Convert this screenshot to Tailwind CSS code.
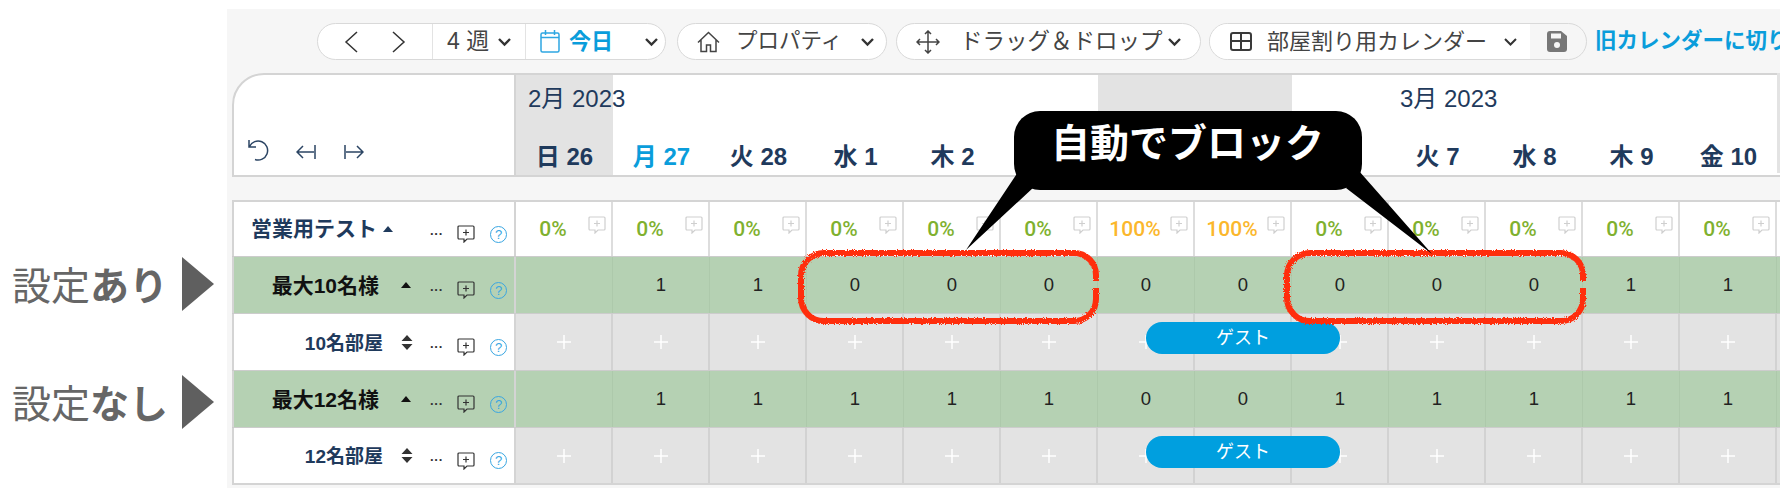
<!DOCTYPE html>
<html lang="ja">
<head>
  <meta charset="UTF-8">
  <title>部屋割り用カレンダー</title>
  <script src="https://cdn.jsdelivr.net/npm/@tailwindcss/browser@4"></script>
</head>
<body class="relative w-[1788px] h-[496px] overflow-hidden bg-white font-['Liberation_Sans','Noto_Sans_CJK_JP',sans-serif]">
  <div class="flex">
    <!-- side labels -->
    <aside class="w-[227px] shrink-0 pt-[257px] pl-[12px] text-[#666666]">
      <div class="flex items-center h-[54px]">
        <p class="w-[170px] pt-[4px] text-[39px] leading-none whitespace-nowrap">設定<b class="font-bold">あり</b></p>
        <div class="w-0 h-0 border-y-[27px] border-y-transparent border-l-[32px] border-l-[#5f5f5f]"></div>
      </div>
      <div class="flex items-center h-[54px] mt-[64px]">
        <p class="w-[170px] pt-[4px] text-[39px] leading-none whitespace-nowrap">設定<b class="font-bold">なし</b></p>
        <div class="w-0 h-0 border-y-[27px] border-y-transparent border-l-[32px] border-l-[#5f5f5f]"></div>
      </div>
    </aside>

    <main class="w-[1553px] h-[479px] mt-[9px] bg-[#f6f6f6] overflow-hidden">
      <!-- toolbar -->
      <div class="flex items-center h-[37px] mt-[14px] pl-[90px] text-[#444444] text-[22px] whitespace-nowrap">
        <div class="flex items-center shrink-0 w-[349px] h-full bg-white rounded-full border border-[#d9d9d9]">
          <div class="flex items-center w-[115px] h-full pl-[26px] border-r border-[#e3e3e3]">
            <svg class="w-[14px] h-[24px]" viewBox="0 0 14 24" fill="none" stroke="#333" stroke-width="1.5"><path d="M13 2 2 12l11 10"/></svg>
            <svg class="w-[14px] h-[24px] ml-[34px]" viewBox="0 0 14 24" fill="none" stroke="#333" stroke-width="1.5"><path d="m1 2 11 10L1 22"/></svg>
          </div>
          <div class="flex items-center w-[93px] h-full pl-[14px] border-r border-[#e3e3e3]">
            <span class="w-[50px] text-[23px]">4 週</span>
            <svg class="w-[15px] h-[10px]" viewBox="0 0 15 10" fill="none" stroke="#333" stroke-width="2.4"><path d="m2 2 5.500 5.500L13 2"/></svg>
          </div>
          <div class="flex items-center h-full pl-[14px]">
            <svg class="w-[20px] h-[23px]" viewBox="0 0 20 23" fill="none" stroke="#2ea6e2" stroke-width="1.500"><rect x="1" y="3" width="18" height="19" rx="1.500"/><path d="M1 7.500h18M5.500 0v5M14.500 0v5"/></svg>
            <b class="ml-[9px] text-[22px] text-[#0a9ddb]">今日</b>
            <svg class="w-[15px] h-[10px] ml-[31px]" viewBox="0 0 15 10" fill="none" stroke="#333" stroke-width="2.4"><path d="m2 2 5.500 5.500L13 2"/></svg>
          </div>
        </div>
        <div class="flex items-center shrink-0 w-[210px] h-full ml-[11px] pl-[19px] bg-white rounded-full border border-[#d9d9d9]">
          <svg class="w-[23px] h-[22px]" viewBox="0 0 23 22" fill="none" stroke="#444" stroke-width="1.500"><path d="M1 11.500 11.500 1.500 22 11.500M4 9v11.500h5.500V14h4v6.500H19V9"/></svg>
          <span class="ml-[16px] w-[110px] text-[21.500px]">プロパティ</span>
          <svg class="w-[15px] h-[10px] ml-[14px]" viewBox="0 0 15 10" fill="none" stroke="#333" stroke-width="2.4"><path d="m2 2 5.500 5.500L13 2"/></svg>
        </div>
        <div class="flex items-center shrink-0 w-[305px] h-full ml-[9px] pl-[19px] bg-white rounded-full border border-[#d9d9d9]">
          <svg class="w-[24px] h-[24px]" viewBox="0 0 24 24" fill="none" stroke="#444" stroke-width="1.500"><path d="M12 1v22M1 12h22M9 4l3-3 3 3M9 20l3 3 3-3M4 9l-3 3 3 3M20 9l3 3-3 3"/></svg>
          <span class="ml-[20px] w-[207px] text-[22.500px]">ドラッグ＆ドロップ</span>
          <svg class="w-[15px] h-[10px]" viewBox="0 0 15 10" fill="none" stroke="#333" stroke-width="2.4"><path d="m2 2 5.500 5.500L13 2"/></svg>
        </div>
        <div class="flex items-center shrink-0 w-[378px] h-full ml-[8px] rounded-full border border-[#d9d9d9] overflow-hidden">
          <div class="flex items-center w-[320px] h-full pl-[20px] bg-white">
            <svg class="w-[22px] h-[19px]" viewBox="0 0 22 19" fill="none" stroke="#3a3a3a" stroke-width="2"><rect x="1" y="1" width="20" height="17" rx="2"/><path d="M1 9h20M11 1v17"/></svg>
            <span class="ml-[15px] w-[222px]">部屋割り用カレンダー</span>
            <svg class="w-[15px] h-[10px] ml-[14px]" viewBox="0 0 15 10" fill="none" stroke="#333" stroke-width="2"><path d="m2 2 5.500 5.500L13 2"/></svg>
          </div>
          <svg class="w-[20px] h-[21px] ml-[17px]" viewBox="0 0 20 21"><path fill="#777777" d="M3 0h11l6 5v13a3 3 0 0 1-3 3H3a3 3 0 0 1-3-3V3a3 3 0 0 1 3-3z"/><rect x="4" y="2.500" width="10" height="5" fill="#f6f6f6"/><circle cx="10" cy="14" r="3" fill="#f6f6f6"/></svg>
        </div>
        <b class="shrink-0 ml-[8px] text-[21.500px] text-[#0a9ddb]">旧カレンダーに切り</b>
      </div>

      <!-- calendar head -->
      <div class="flex h-[104px] ml-[5px] mt-[13px]">
        <div class="flex items-end shrink-0 w-[284px] h-full pb-[14px] pl-[14px] bg-white rounded-tl-[32px] border-2 border-[#d4d4d4]">
          <svg class="w-[22px] h-[23px]" viewBox="0 0 22 23" fill="none" stroke="#2b4463" stroke-width="1.500"><path d="M1 2v7h7M1.500 8.500A9.500 9.500 0 1 1 7 21.500"/></svg>
          <svg class="w-[20px] h-[14px] ml-[26px] mb-[2px]" viewBox="0 0 20 14" fill="none" stroke="#2b4463" stroke-width="1.500"><path d="M19 0v14M18 7H1M7 1 1 7l6 6"/></svg>
          <svg class="w-[20px] h-[14px] ml-[28px] mb-[2px]" viewBox="0 0 20 14" fill="none" stroke="#2b4463" stroke-width="1.500"><path d="M1 0v14M2 7h17M13 1l6 6-6 6"/></svg>
        </div>
        <div class="relative flex flex-1 h-full bg-white border-y-2 border-[#d4d4d4]" id="head">
          <span class="absolute left-[12px] top-[8px] text-[24px] leading-[32px] text-[#1f3a5c] whitespace-nowrap">2月 2023</span>
          <span class="absolute left-[884px] top-[8px] text-[24px] leading-[32px] text-[#1f3a5c] whitespace-nowrap">3月 2023</span>
        </div>
      </div>

      <!-- rows -->
      <div class="ml-[5px] mt-[23px] border-t-2 border-[#d4d4d4]" id="rows"></div>
    </main>
  </div>

  <!-- annotation layer -->
  <svg class="absolute left-0 top-0 w-[1788px] h-[496px] pointer-events-none" viewBox="0 0 1788 496" fill="none">
    <defs>
      <filter id="rough" x="-5%" y="-15%" width="110%" height="130%">
        <feTurbulence type="fractalNoise" baseFrequency="0.9" numOctaves="2" seed="4"/>
        <feDisplacementMap in="SourceGraphic" scale="4"/>
      </filter>
    </defs>
    <g stroke="#ff2d0c" stroke-width="6" filter="url(#rough)">
      <path d="M1096 281V275a22 22 0 0 0-22-22H824a23 23 0 0 0-23 23v22a23 23 0 0 0 23 23H1074a22 22 0 0 0 22-22V288"/>
      <path d="M1583 281V275a22 22 0 0 0-22-22H1310a23 23 0 0 0-23 23v22a23 23 0 0 0 23 23H1561a22 22 0 0 0 22-22V288"/>
    </g>
    <path fill="#000" d="M1018 172 966 250 1034 187ZM1346 188 1432 254 1359 171Z"/>
    <rect x="1014" y="111" width="348" height="79" rx="26" fill="#000"/>
  </svg>
  <p class="absolute left-[1051px] top-[121px] text-[39px] leading-[46px] font-bold text-white whitespace-nowrap">自動でブロック</p>

  <script>
    // the labels of 金3 to 月6 sit under the callout in the picture
    var days = ['日 26','月 27','火 28','水 1','木 2','','','','','火 7','水 8','木 9','金 10'];
    var pct = ['0%','0%','0%','0%','0%','0%','100%','100%','0%','0%','0%','0%','0%'];
    var blocked = ['','1','1','0','0','0','0','0','0','0','0','1','1'];
    var open = ['','1','1','1','1','1','0','0','1','1','1','1','1'];

    var comment = function (cls, stroke) {
      return '<svg class="' + cls + '" viewBox="0 0 18 18" fill="none" stroke="' + stroke + '" stroke-width="1.200"><path d="M2 1h14a1 1 0 0 1 1 1v11a1 1 0 0 1-1 1h-6l-3 3v-3H2a1 1 0 0 1-1-1V2a1 1 0 0 1 1-1z"/><path d="M9 4.500v6M6 7.500h6"/></svg>';
    };
    var plus = '<svg class="w-[14px] h-[14px]" viewBox="0 0 14 14" stroke="#fff" stroke-width="1.500"><path d="M7 0v14M0 7h14"/></svg>';
    var up = function (stroke) {
      return '<div class="w-0 h-0 border-x-[5.500px] border-x-transparent border-b-[6px] ' + stroke + '"></div>';
    };
    var sort = '<svg class="w-[12px] h-[15px] ml-[18px]" viewBox="0 0 12 15" fill="#333"><path d="M6 0l5.500 6H.5zM6 15 .5 9h11z"/></svg>';

    var tools = '<div class="flex items-center ml-auto mt-[10px] pr-[7px]">' +
      '<span class="w-[12px] -mt-[2px] text-[13px] leading-none font-bold text-[#333333] whitespace-nowrap">···</span>' +
      comment('w-[18px] h-[18px] ml-[15px]', '#333') +
      '<span class="flex items-center justify-center w-[17px] h-[17px] ml-[15px] rounded-full border border-[#39a6e2] text-[13px] leading-none text-[#39a6e2]">?</span>' +
      '</div>';

    var label = function (inner, bg) {
      return '<div class="flex items-center shrink-0 w-[284px] h-full border-x-2 border-[#d4d4d4] ' + bg + '">' + inner + tools + '</div>';
    };

    var shadeHead = function (i) { return i === 0 || i === 6 || i === 7; };
    document.getElementById('head').insertAdjacentHTML('beforeend', days.map(function (d, i) {
      return '<div class="flex items-end justify-center shrink-0 w-[97px] h-full pb-[2px] text-[24px] leading-[32px] font-bold whitespace-nowrap ' +
        (shadeHead(i) ? 'bg-[#e3e3e3] ' : '') + (i === 1 ? 'text-[#0a9ddb]' : 'text-[#1f3a5c]') + '">' + d + '</div>';
    }).join('') + '<div class="flex-1 h-full -my-[2px] bg-[#e3e3e3]"></div>');

    var rowPct = label('<b class="ml-[17px] text-[21px] text-[#1f3a5c]">営業用テスト</b><div class="ml-[6px]">' + up('border-b-[#1f3a5c]') + '</div>', 'bg-white') +
      pct.map(function (p) {
        return '<div class="relative flex items-center shrink-0 w-[97px] h-full bg-white border-r-2 border-[#dddddd]"><span class="w-[74px] pt-[2px] text-center font-[Roboto] text-[21px] font-medium ' +
          (p === '0%' ? 'text-[#7fb12f]' : 'text-[#fbb72c]') + '">' + p + '</span>' + comment('absolute right-[5px] top-[14px] w-[18px] h-[18px]', '#cfcfcf') + '</div>';
      }).join('') + '<div class="flex-1 bg-white"></div>';

    var rowCount = function (name, vals) {
      return label('<b class="w-[145px] pt-[2px] text-right text-[21px] text-[#111111]">' + name + '</b><div class="ml-[22px]">' + up('border-b-[#111111]') + '</div>', 'bg-[#b5d1b3]') +
        vals.map(function (v) {
          return '<div class="flex items-center justify-center shrink-0 w-[97px] h-full bg-[#b5d1b3] border-r border-[#adc9ab] text-[18.500px] text-[#222222]">' + v + '</div>';
        }).join('') + '<div class="flex-1 bg-[#b5d1b3]"></div>';
    };

    var rowRoom = function (name, top) {
      var cells = '';
      for (var i = 0; i < 13; i++) {
        cells += '<div class="flex items-center justify-center shrink-0 w-[97px] h-full bg-[#e3e3e3] border-r-2 border-[#d2d2d2]">' + plus + '</div>';
      }
      return label('<b class="w-[149px] pt-[4px] text-right text-[19px] text-[#1f3a5c]">' + name + '</b>' + sort, 'bg-white') + cells +
        '<div class="flex-1 bg-[#e3e3e3]"></div>' +
        '<div class="absolute left-[914px] ' + top + ' flex items-start justify-center w-[194px] h-[32px] pt-[6px] rounded-[16px] bg-[#009fdf] text-[18px] leading-[20px] text-white">ゲスト</div>';
    };

    document.getElementById('rows').innerHTML = [
      '<div class="relative flex h-[55px] border-b border-[#cccccc]">' + rowPct + '</div>',
      '<div class="relative flex h-[57px] border-b border-[#cccccc]">' + rowCount('最大10名様', blocked) + '</div>',
      '<div class="relative flex h-[57px] border-b border-[#cccccc]">' + rowRoom('10名部屋', 'top-[8px]') + '</div>',
      '<div class="relative flex h-[57px] border-b border-[#cccccc]">' + rowCount('最大12名様', open) + '</div>',
      '<div class="relative flex h-[57px] border-b-2 border-[#d4d4d4]">' + rowRoom('12名部屋', 'top-[8px]') + '</div>'
    ].join('');
  </script>
</body>
</html>
